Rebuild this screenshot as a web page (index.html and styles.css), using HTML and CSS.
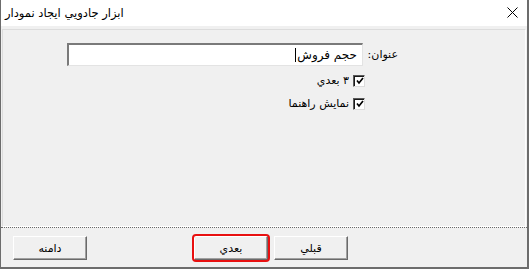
FILE: index.html
```html
<!DOCTYPE html>
<html lang="fa">
<head>
<meta charset="utf-8">
<link rel="stylesheet" href="styles.css">
</head>
<body>
<div class="window">
  <div class="titlebar">
    <span class="title" dir="rtl">ابزار جادويي ايجاد نمودار</span>
    <svg class="close" width="11" height="11" viewBox="0 0 11 11"><path d="M0.5 0.5 L10.5 10.5 M10.5 0.5 L0.5 10.5" stroke="#000" stroke-width="1" fill="none"/></svg>
  </div>
  <div class="client">
    <div class="panel">
      <div class="form" dir="rtl">
        <span class="label">عنوان:</span>
        <div class="textbox"><span class="value">حجم فروش</span><span class="caret"></span></div>
        <span></span>
        <div class="check first">
          <span class="box"><svg width="8" height="8" viewBox="0 0 8 8"><path d="M1 3.5 L3 6 L7 1" stroke="#000" stroke-width="1.7" fill="none"/></svg></span>
          <span class="ctext">٣ بعدي</span>
        </div>
        <span></span>
        <div class="check">
          <span class="box"><svg width="8" height="8" viewBox="0 0 8 8"><path d="M1 3.5 L3 6 L7 1" stroke="#000" stroke-width="1.7" fill="none"/></svg></span>
          <span class="ctext">نمايش راهنما</span>
        </div>
      </div>
    </div>
    <div class="footer">
      <button class="btn">دامنه</button>
      <div class="group">
        <span class="hl"><button class="btn">بعدي</button></span>
        <button class="btn">قبلي</button>
      </div>
    </div>
  </div>
</div>
</body>
</html>
```
FILE: styles.css
```css
* { box-sizing: border-box; }
html, body { margin: 0; padding: 0; }
body {
  width: 529px;
  height: 269px;
  background: #f0f0f0;
  font-family: "DejaVu Sans", Tahoma, sans-serif;
  overflow: hidden;
}
.window {
  width: 529px;
  height: 269px;
  border-left: 1px solid #6c6c6c;
  border-right: 2px solid #6c6c6c;
  border-bottom: 2px solid #6c6c6c;
  display: flex;
  flex-direction: column;
  background: #f0f0f0;
}
.titlebar {
  height: 26px;
  background: #fff;
  display: flex;
  align-items: center;
  justify-content: space-between;
  padding: 0 9px 0 4px;
  flex: none;
}
.title {
  font-size: 11.5px;
  color: #000;
}
.close { display: block; margin-top: -1px; }
.client {
  flex: 1;
  display: flex;
  flex-direction: column;
  padding-top: 2px;
  background: #f0f0f0;
}
.panel {
  height: 198px;
  margin: 1px 1px 0 1px;
  border-top: 1px solid #dcdcdc;
  border-left: 1px solid #dcdcdc;
  border-right: 1px solid #fdfdfd;
  border-bottom: 1px solid #ffffff;
  padding: 13px 127px 0 0;
}
.form {
  display: grid;
  grid-template-columns: 28px 296px;
  column-gap: 7px;
  row-gap: 0;
  justify-content: start;
  align-items: center;
  font-size: 11px;
  color: #000;
}
.label { white-space: nowrap; }
.textbox {
  height: 23px;
  background: #fff;
  border-top: 2px solid #7a7a7a;
  border-left: 2px solid #7a7a7a;
  border-right: 1px solid #e3e3e3;
  border-bottom: 1px solid #e3e3e3;
  display: flex;
  align-items: center;
  padding-right: 5px;
  font-size: 12px;
}
.caret {
  width: 1px;
  height: 14px;
  background: #000;
  margin-right: 1px;
}
.check {
  display: flex;
  align-items: center;
  gap: 4px;
  height: 23px;
  margin-right: -2px;
}
.check.first { margin-top: 3px; }
.box {
  width: 12px;
  height: 12px;
  background: #fff;
  border-top: 1px solid #5a5a5a;
  border-left: 1px solid #5a5a5a;
  border-bottom: 1px solid #dcdcdc;
  border-right: 1px solid #dcdcdc;
  box-shadow: inset 1px 1px 0 #1a1a1a;
  display: flex;
  align-items: center;
  justify-content: center;
  padding: 1px 0 0 1px;
}
.box svg { display: block; }
.ctext { font-size: 11px; }
.footer {
  flex: 1;
  border-top: 1px dotted #6a6a6a;
  display: flex;
  align-items: flex-start;
  padding: 8px 0 0 12px;
}
.group {
  display: flex;
  gap: 6px;
  margin-left: 107px;
}
.hl {
  position: relative;
  display: block;
}
.hl::after {
  content: "";
  position: absolute;
  left: -2px;
  top: -2px;
  right: -2px;
  bottom: -2px;
  border: 2px solid #e81010;
  border-radius: 4px;
  pointer-events: none;
}
.btn {
  display: block;
  width: 74px;
  height: 24px;
  background: #f0f0f0;
  border-top: 1px solid #ffffff;
  border-left: 1px solid #ffffff;
  border-right: 1px solid #6a6a6a;
  border-bottom: 1px solid #6a6a6a;
  box-shadow: inset -1px -1px 0 #a0a0a0;
  font-family: "DejaVu Sans", Tahoma, sans-serif;
  font-size: 11px;
  color: #000;
  padding: 0;
  margin: 0;
}
```
